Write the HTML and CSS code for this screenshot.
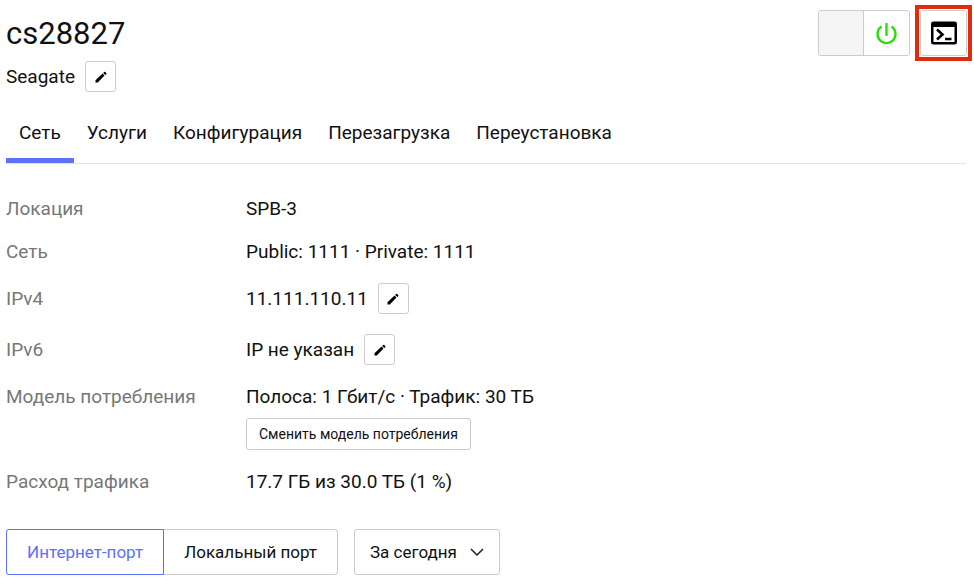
FILE: index.html
```html
<!DOCTYPE html>
<html lang="ru">
<head>
<meta charset="utf-8">
<meta name="viewport" content="width=device-width, initial-scale=1">
<title>cs28827</title>
<link rel="stylesheet" href="styles.css">
</head>
<body>
<svg class="sprite" aria-hidden="true">
  <symbol id="pencil" viewBox="0 0 14 14">
    <path d="M1.500 12.500v-2.200L8.500 3.600l2 2L3.800 12.500zM9.200 3l.9-.9a.8.8 0 0 1 1.100 0l1 1a.8.8 0 0 1 0 1.100l-.9.900z"/>
  </symbol>
</svg>
<header class="header">
  <div>
    <h1 class="title">cs28827</h1>
    <div class="subtitle">
      <span>Seagate</span>
      <button class="edit" type="button" aria-label="Изменить имя"><svg><use href="#pencil"/></svg></button>
    </div>
  </div>
  <div class="actions">
    <div class="power">
      <button class="power-off" type="button" aria-label="Выключить"></button>
      <button class="power-on" type="button" aria-label="Включить">
        <svg viewBox="0 0 24 24" width="24" height="24"><path d="M11.500 2v13M6.500 5.600a9 9 0 1 0 10 0" fill="none" stroke="#2fdc0b" stroke-width="2.400"/></svg>
      </button>
    </div>
    <div class="highlight">
      <button class="console" type="button" aria-label="Консоль">
        <svg viewBox="0 0 26 24" width="26" height="24">
          <path fill-rule="evenodd" d="M2.500 .500h21a2.500 2.500 0 0 1 2.500 2.500v18a2.500 2.500 0 0 1-2.500 2.500h-21A2.500 2.500 0 0 1 0 21V3A2.500 2.500 0 0 1 2.500.500zM2.500 6v15h21V6z"/>
          <path d="M6 8.500l5.500 5L6 18.500M14 18h6.500" fill="none" stroke="#000" stroke-width="2.600"/>
        </svg>
      </button>
    </div>
  </div>
</header>
<nav class="tabs">
  <a class="tab tab-active" href="#network" aria-current="page">Сеть</a>
  <a class="tab" href="#services">Услуги</a>
  <a class="tab" href="#config">Конфигурация</a>
  <a class="tab" href="#reboot">Перезагрузка</a>
  <a class="tab" href="#reinstall">Переустановка</a>
</nav>
<main>
  <dl class="details">
    <dt>Локация</dt>
    <dd>SPB-3</dd>
    <dt>Сеть</dt>
    <dd>Public: 1111 · Private: 1111</dd>
    <dt>IPv4</dt>
    <dd class="editable">11.111.110.11 <button class="edit" type="button" aria-label="Изменить IPv4"><svg><use href="#pencil"/></svg></button></dd>
    <dt>IPv6</dt>
    <dd class="editable">IP не указан <button class="edit" type="button" aria-label="Изменить IPv6"><svg><use href="#pencil"/></svg></button></dd>
    <dt class="top">Модель потребления</dt>
    <dd class="stack">Полоса: 1 Гбит/с · Трафик: 30 ТБ <button class="small-button" type="button">Сменить модель потребления</button></dd>
    <dt>Расход трафика</dt>
    <dd>17.7 ГБ из 30.0 ТБ (1 %)</dd>
  </dl>
  <div class="filters">
    <div class="segments">
      <button class="segment segment-active" type="button" aria-pressed="true">Интернет-порт</button>
      <button class="segment" type="button" aria-pressed="false">Локальный порт</button>
    </div>
    <div class="period">
      <select class="period-select" aria-label="Период"><option>За сегодня</option></select>
      <svg class="chevron" viewBox="0 0 14 8"><path d="M1 1l6 6 6-6" fill="none" stroke="#222" stroke-width="1.500"/></svg>
    </div>
  </div>
</main>
</body>
</html>
```
FILE: styles.css
```css
* {
  box-sizing: border-box;
}

body {
  margin: 0;
  padding: 5px 2px 10px 6px;
  background: #fff;
  color: #111;
  font: 19px/23px Roboto, "Noto Sans", sans-serif;
}

button,
select {
  margin: 0;
  padding: 0;
  border: 1px solid #ccc;
  border-radius: 3px;
  background: #fff;
  color: inherit;
  font: inherit;
}

button {
  display: flex;
  align-items: center;
  justify-content: center;
}

.sprite {
  display: none;
}

.header {
  display: flex;
  justify-content: space-between;
  align-items: flex-start;
}

.title {
  margin: 10px 0 8px;
  font-size: 31px;
  line-height: 38px;
  font-weight: 400;
}

.subtitle,
.editable {
  display: flex;
  align-items: center;
  gap: 10px;
}

.edit {
  width: 31px;
  height: 31px;
}

.edit svg {
  width: 14px;
  height: 14px;
}

.actions {
  display: flex;
  align-items: center;
  gap: 5px;
}

.power {
  display: flex;
  height: 46px;
  border: 1px solid #ccc;
  border-radius: 3px;
}

.power button {
  width: 45px;
  border: 0;
}

.power .power-off {
  border-right: 1px solid #ccc;
  border-radius: 2px 0 0 2px;
  background: #f5f5f5;
}

.highlight {
  padding: 1px;
  border: 4px solid #e22b0c;
}

.console {
  width: 47px;
  height: 46px;
}

.tabs {
  display: flex;
  margin: 17px 6px 33px 0;
  border-bottom: 1px solid #e2e2e2;
}

.tab {
  padding: 12px 13px 19px;
  color: inherit;
  text-decoration: none;
}

.tab-active {
  padding-bottom: 14px;
  border-bottom: 5px solid #5c70f8;
}

.details {
  display: grid;
  grid-template-columns: 240px 1fr;
  row-gap: 20px;
  align-items: center;
  margin: 0;
}

.details dt {
  color: #777;
}

.details dd {
  margin: 0;
}

.details .top {
  align-self: start;
}

.stack {
  display: flex;
  flex-direction: column;
  align-items: flex-start;
  gap: 10px;
}

.small-button {
  height: 32px;
  padding: 0 12px;
  font-size: 14px;
}

.filters {
  display: flex;
  gap: 16px;
  margin-top: 36px;
  font-size: 17px;
}

.segments {
  display: flex;
}

.segment {
  height: 46px;
  padding: 0 20px;
  border-left: 0;
  border-radius: 0 3px 3px 0;
}

.segment-active {
  border: 1px solid #5c70f8;
  border-radius: 3px 0 0 3px;
  color: #5c70f8;
}

.period {
  display: grid;
  align-items: center;
}

.period-select {
  grid-area: 1 / 1;
  height: 46px;
  padding: 1px 42px 0 15px;
  appearance: none;
}

.chevron {
  grid-area: 1 / 1;
  justify-self: end;
  width: 14px;
  height: 8px;
  margin-right: 16px;
  pointer-events: none;
}
```
